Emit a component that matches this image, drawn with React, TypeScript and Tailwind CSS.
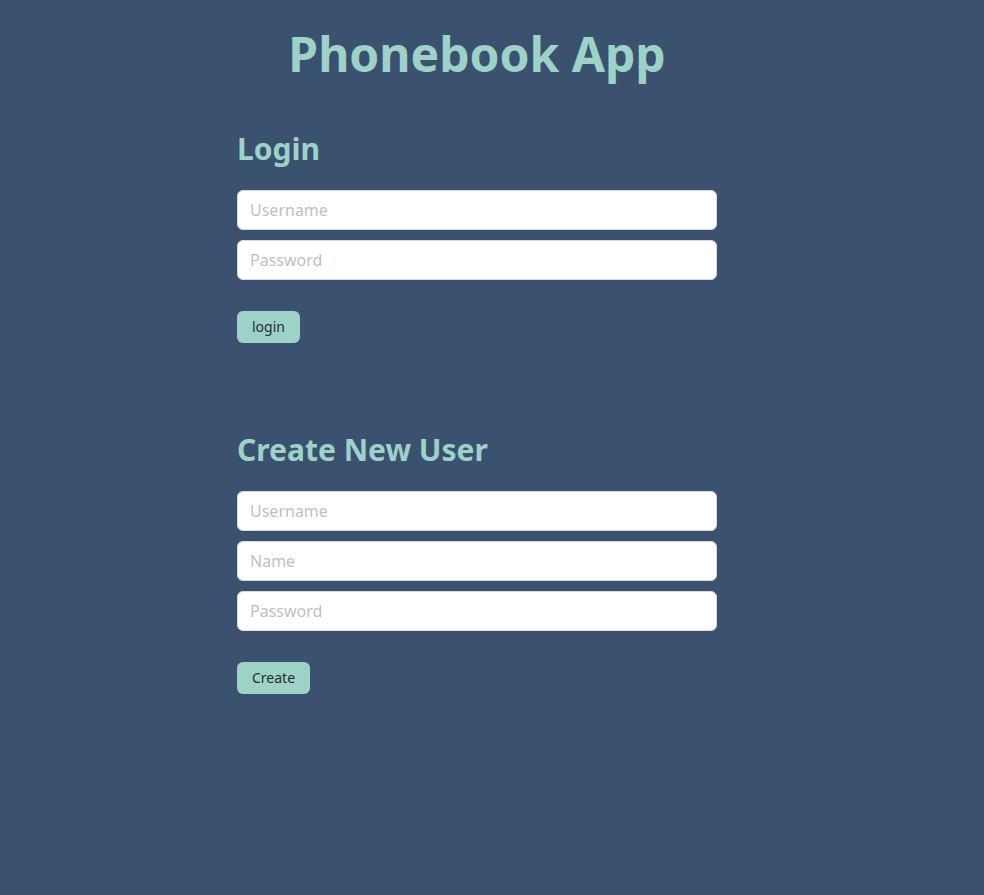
const inputClass =
  "h-10 w-full rounded-md border border-[#d6dbe0] bg-white px-3 text-base text-slate-800 outline-none placeholder:text-[#bfbfbf]";

function Field({ placeholder, type = "text" }: { placeholder: string; type?: string }) {
  return <input type={type} placeholder={placeholder} className={inputClass} />;
}

export default function App() {
  return (
    <div className="min-h-[895px] bg-[#3a5270] font-['Noto_Sans','Open_Sans',sans-serif]">
      <div className="flex justify-center pr-[30px]">
        <div className="w-[480px]">
          <h1 className="pt-[22px] text-center text-[48px] font-bold leading-[64px] text-[#9dd3c7]">
            Phonebook App
          </h1>

          <section className="mt-[43px]">
            <h2 className="text-[30px] font-bold leading-[40px] text-[#9dd3c7]">Login</h2>
            <form className="mt-[21px] flex flex-col gap-[10px]" onSubmit={(e) => e.preventDefault()}>
              <Field placeholder="Username" />
              <Field placeholder="Password" type="password" />
              <div className="mt-[21px]">
                <button className="h-8 rounded-md bg-[#9dd3c7] px-[15px] text-sm text-[#1f2d2b]">login</button>
              </div>
            </form>
          </section>

          <section className="mt-[87px]">
            <h2 className="text-[30px] font-bold leading-[40px] text-[#9dd3c7]">Create New User</h2>
            <form className="mt-[21px] flex flex-col gap-[10px]" onSubmit={(e) => e.preventDefault()}>
              <Field placeholder="Username" />
              <Field placeholder="Name" />
              <Field placeholder="Password" type="password" />
              <div className="mt-[21px]">
                <button className="h-8 rounded-md bg-[#9dd3c7] px-[15px] text-sm text-[#1f2d2b]">Create</button>
              </div>
            </form>
          </section>
        </div>
      </div>
    </div>
  );
}
